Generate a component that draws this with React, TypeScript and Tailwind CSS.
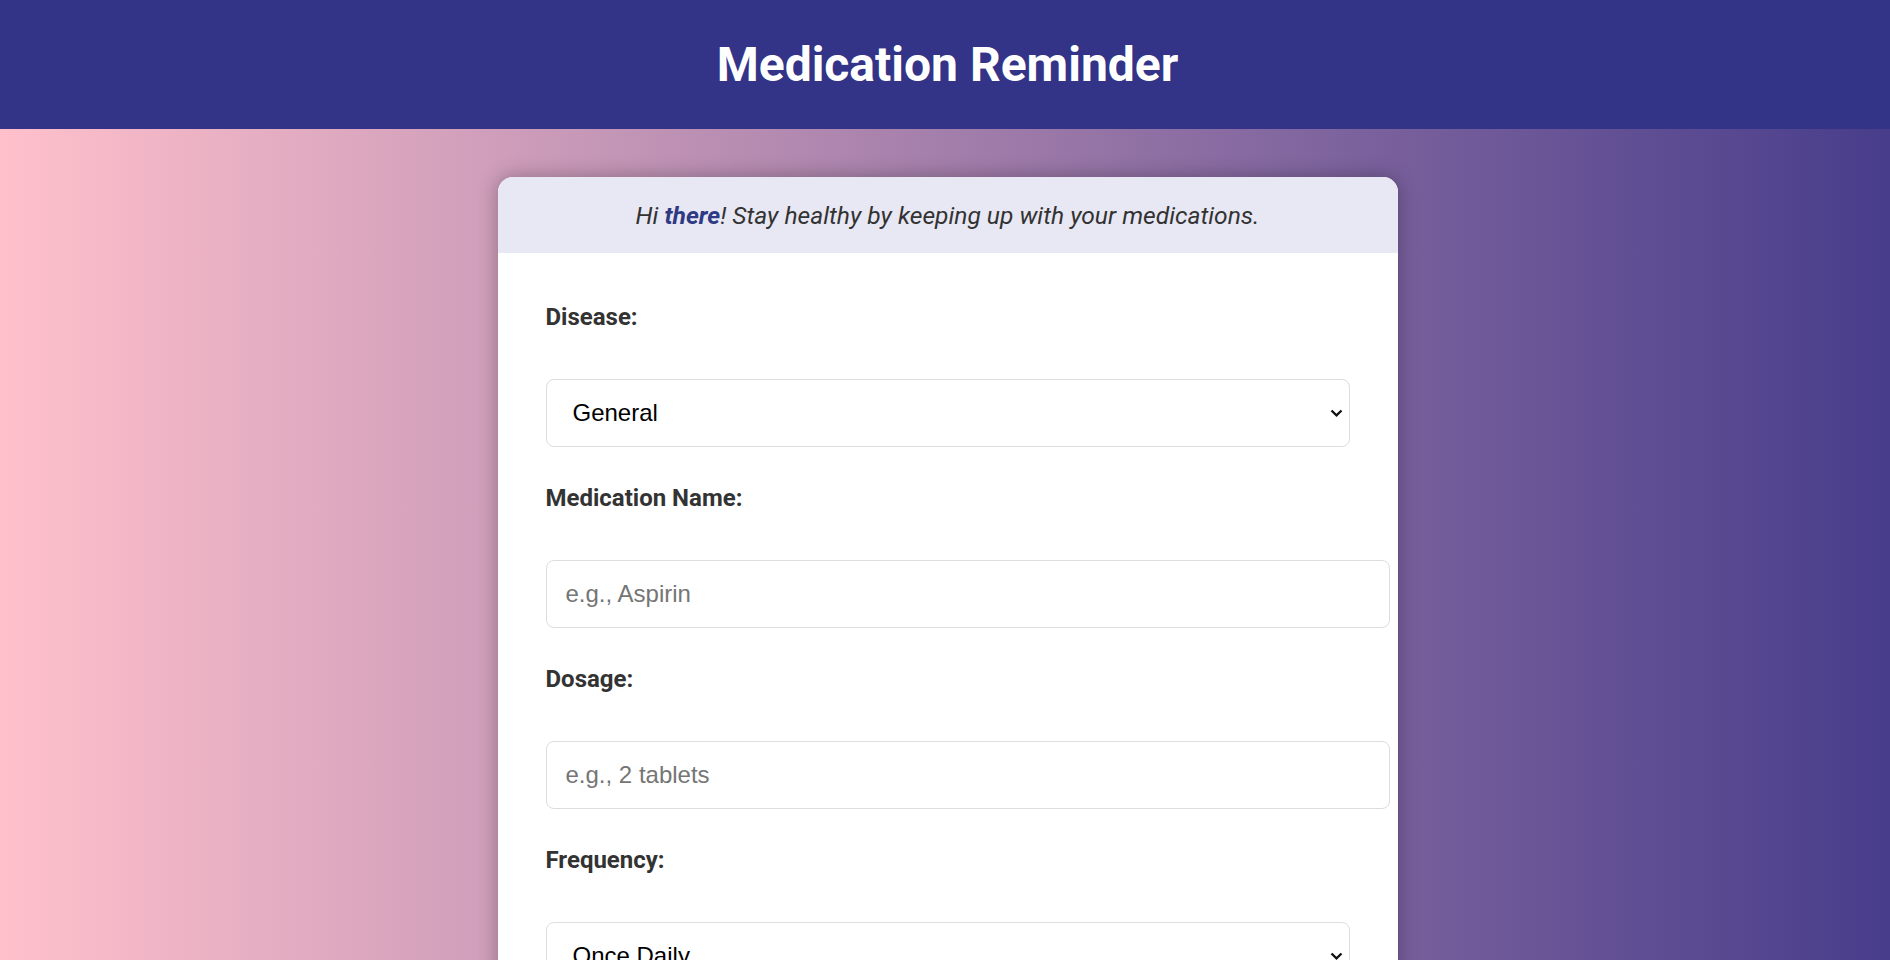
import React from "react";

const diseases = ["General", "Diabetes", "Hypertension", "Asthma", "Heart Disease"];
const frequencies = ["Once Daily", "Twice Daily", "Three Times Daily", "Weekly"];

function Label({ children }: { children: React.ReactNode }) {
  return (
    <label className="block text-[24px] leading-[28px] font-bold text-[#333] mb-[48px]">
      {children}
    </label>
  );
}

function SelectField({ options }: { options: string[] }) {
  return (
    <div className="relative mb-[37px]">
      <select
        defaultValue={options[0]}
        className="block w-full h-[68px] appearance-none border border-[#ddd] rounded-[8px] bg-white text-black pl-[26px] pr-10 text-[24px] font-['Liberation_Sans',Arial,sans-serif] outline-none"
      >
        {options.map((o) => (
          <option key={o}>{o}</option>
        ))}
      </select>
      <svg
        className="absolute right-[7px] top-1/2 -translate-y-1/2 pointer-events-none"
        width="13"
        height="8"
        viewBox="0 0 13 8"
        fill="none"
      >
        <polyline points="1.5,1.5 6.5,6.3 11.5,1.5" stroke="#111" strokeWidth="2.3" />
      </svg>
    </div>
  );
}

function TextField({ placeholder }: { placeholder: string }) {
  return (
    <input
      type="text"
      placeholder={placeholder}
      className="block box-content w-full h-[66px] px-[19px] py-0 border border-[#ddd] rounded-[8px] bg-white text-black text-[24px] font-['Liberation_Sans',Arial,sans-serif] placeholder:text-[#757575] mb-[37px] outline-none"
    />
  );
}

export default function App() {
  return (
    <div className="min-h-screen bg-[linear-gradient(to_right,#ffc0cb,#483d8b)] font-['Roboto',sans-serif]">
      <header className="bg-[#333388] h-[129px] flex items-center justify-center pl-[5px]">
        <h1 className="text-white text-[48px] font-bold">Medication Reminder</h1>
      </header>
      <main className="flex justify-center pt-[48px] pb-12 pl-[5px]">
        <div className="w-[900px] bg-white rounded-[15px] shadow-[0_0_20px_rgba(0,0,0,0.3)] overflow-hidden">
          <div className="bg-[#e8e8f4] h-[76px] flex items-center justify-center pt-[2px] italic text-[24.6px] text-[#333]">
            <p>
              Hi <strong className="text-[#2f3a85]">there</strong>! Stay healthy by keeping up with your
              medications.
            </p>
          </div>
          <form className="px-12 pt-[50px] pb-10">
            <Label>Disease:</Label>
            <SelectField options={diseases} />
            <Label>Medication Name:</Label>
            <TextField placeholder="e.g., Aspirin" />
            <Label>Dosage:</Label>
            <TextField placeholder="e.g., 2 tablets" />
            <Label>Frequency:</Label>
            <SelectField options={frequencies} />
            <Label>Time:</Label>
            <TextField placeholder="e.g., 08:00 AM" />
          </form>
        </div>
      </main>
    </div>
  );
}
